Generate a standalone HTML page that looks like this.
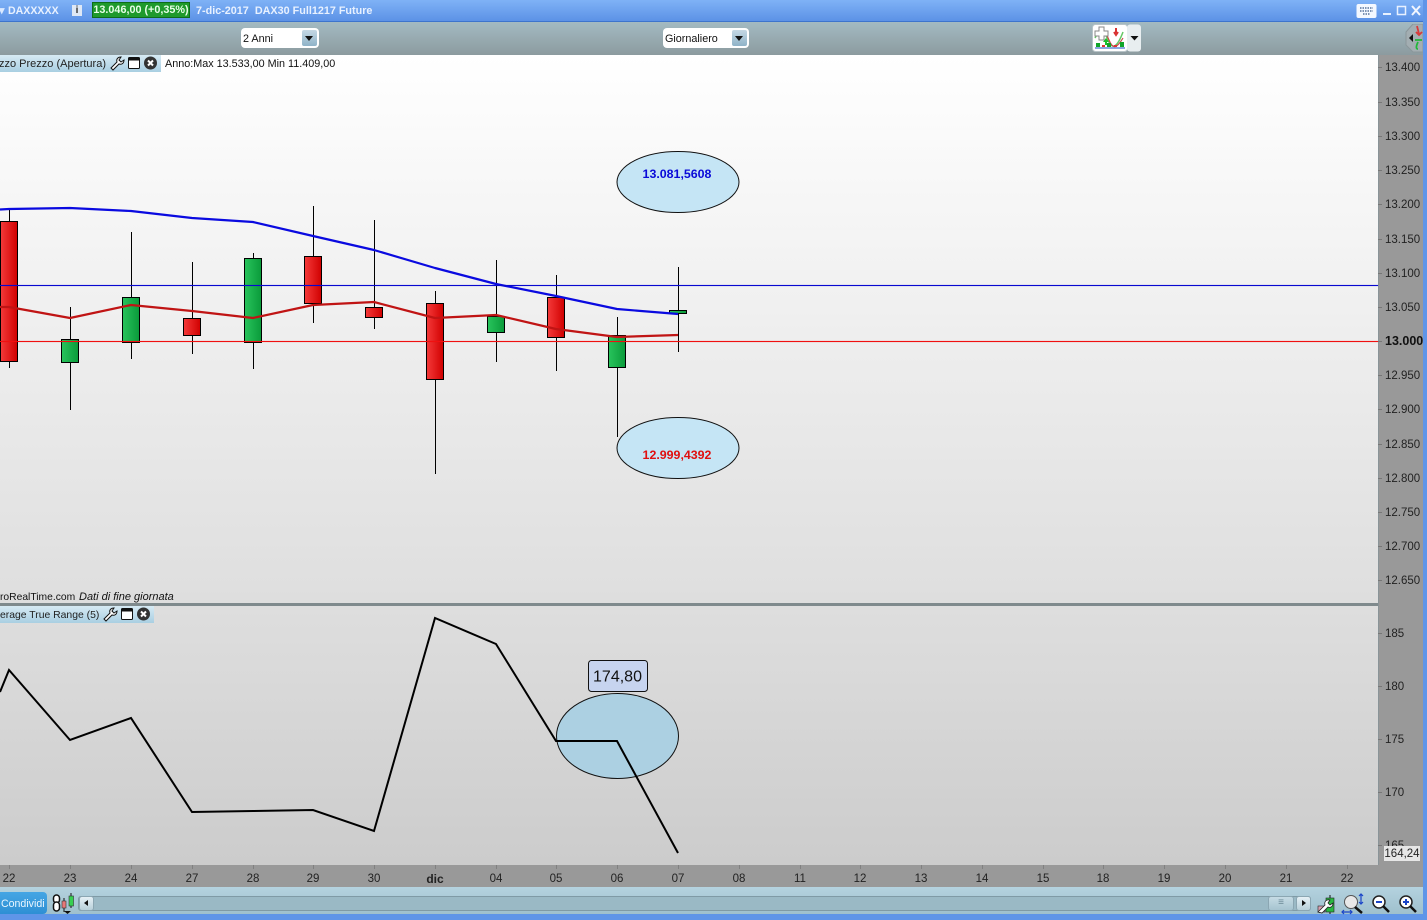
<!DOCTYPE html>
<html><head><meta charset="utf-8"><style>
html,body{margin:0;padding:0;width:1427px;height:920px;overflow:hidden;background:#999;font-family:"Liberation Sans",sans-serif}
.a{position:absolute}
.t{position:absolute;white-space:nowrap;font-size:11px;color:#111;line-height:13px}
.sel{position:absolute;top:28px;height:20px;background:#fff;border-radius:4px;font-size:10.8px;line-height:22px;padding-left:2px;box-sizing:border-box;color:#111}
.btn{position:absolute;top:2px;right:2px;width:15px;height:16px;background:linear-gradient(#c5d8e4,#8fb3c8);border-radius:2px}
.btn:after{content:"";position:absolute;left:3px;top:6px;border:4px solid transparent;border-top:5px solid #111;border-bottom:0}
.y{position:absolute;left:1385px;font-size:11.5px;color:#222;line-height:13px;white-space:nowrap}
.x{position:absolute;top:873px;width:40px;text-align:center;font-size:11.5px;color:#222;line-height:13px}
.tab{position:absolute;left:0;background:linear-gradient(#d6eaf4,#a9cfe2);color:#222;line-height:18px;white-space:nowrap;overflow:hidden}
</style></head><body>
<div class="a" style="left:0;top:0;width:1427px;height:21px;background:linear-gradient(#7fb2f6,#5c92e6);border-bottom:1px solid #3d74cc"></div>
<div class="a" style="left:0;top:22px;width:1427px;height:33px;background:linear-gradient(#a3bac2,#8c9b9f)"></div>
<div class="a" style="left:1423px;top:0;width:4px;height:920px;background:#5f95e8"></div>
<div class="t" style="left:-1px;top:5px;font-size:11px;color:#dbe9ff;font-weight:bold">&#9662;</div>
<div class="t" style="left:8px;top:5px;color:#e8f1ff;font-weight:bold;font-size:10.6px">DAXXXXX</div>
<div class="a" style="left:72px;top:5px;width:10px;height:11px;background:#dfe8f5;color:#333;font:bold 10px/11px 'Liberation Sans',sans-serif;text-align:center">i</div>
<div class="a" style="left:92px;top:2px;width:98px;height:16px;background:#1f9a2c;border:1px solid #0d6d18;box-sizing:border-box;color:#e8ffe8;font:bold 10.8px/15px 'Liberation Sans',sans-serif;text-align:center;white-space:nowrap">13.046,00 (+0,35%)</div>
<div class="t" style="left:196px;top:5px;color:#e8f1ff;font-weight:bold;font-size:10.8px">7-dic-2017<span style="margin-left:3px">&nbsp;</span>DAX30 Full1217 Future</div>
<svg class="a" style="left:1356px;top:3px" width="65" height="16" viewBox="0 0 65 16"><rect x="0.500" y="1" width="20" height="14" rx="2" fill="#f4f8ff"/><path d="M4 5h13M4 8h13M7 11h7" stroke="#56739c" stroke-width="1.500" stroke-dasharray="1.500 1"/><path d="M27 11h8" stroke="#e8f1ff" stroke-width="2"/><rect x="41.500" y="3.500" width="8" height="8" fill="none" stroke="#e8f1ff" stroke-width="1.500"/><path d="M56 3l8 9M64 3l-8 9" stroke="#f2f6ff" stroke-width="2"/></svg>
<div class="sel" style="left:241px;width:78px">2 Anni<div class="btn"></div></div>
<div class="sel" style="left:663px;width:86px">Giornaliero<div class="btn"></div></div>
<svg class="a" style="left:1092px;top:24px" width="50" height="28" viewBox="0 0 50 28"><rect x="0.500" y="0.500" width="35" height="27" rx="3" fill="#fff" stroke="#b8c4c8"/><rect x="35" y="0.500" width="14" height="27" rx="3" fill="#e8eef0"/><path d="M38.500 12h8l-4 4.500z" fill="#111"/><path d="M3 14c5-10 9-8 13 2s9 8 15-8" stroke="#65c765" stroke-width="1.500" fill="none"/><path d="M3 12c6-8 10-6 14 4s8 8 14-2" stroke="#c84b4b" stroke-width="1.200" fill="none"/><path d="M7 3h5v4h4v5h-4v4H7v-4H3V7h4z" fill="#fff" stroke="#888"/><path d="M14 14l-3 4h2v3h2v-3h2z" fill="#1cc02c"/><path d="M24 4v5M22 8l2 3 2-3" stroke="#d93333" stroke-width="2" fill="none"/><path d="M3 24h30" stroke="#174fc0"/><path d="M4 19h4v4H4zM15 19h4v4h-4zM28 18h4v5h-4z" fill="#12a52a"/><path d="M10 21h3v2h-3zM22 21h3v2h-3z" fill="#d33"/></svg>
<svg class="a" style="left:1405px;top:24px" width="18" height="29" viewBox="0 0 18 29"><path d="M18 0H8L1 8v13l7 7h10z" fill="#a3aeb2" stroke="#8b979b"/><path d="M8 10l-4 4 4 4z" fill="#111"/><path d="M12 2l2 8M11 8l3 3 3-3" stroke="#d83a3a" stroke-width="1.800" fill="none"/><path d="M13 25c-3 0-1-5 0-7M10 16h7" stroke="#22b83a" stroke-width="1.800" fill="none"/></svg>

<div class="a" style="left:0;top:55px;width:1378px;height:548px;background:linear-gradient(#fff,#dedede)"></div>
<div class="a" style="left:0;top:603px;width:1378px;height:3px;background:#7f8a8d"></div>
<div class="a" style="left:0;top:606px;width:1378px;height:259px;background:linear-gradient(#dedede,#cccccc)"></div>
<div class="a" style="left:1378px;top:55px;width:45px;height:810px;background:#999"></div>
<div class="a" style="left:1378px;top:55px;width:1px;height:810px;background:#8a9498"></div>
<div class="a" style="left:0;top:865px;width:1423px;height:22px;background:#999"></div>
<div class="a" style="left:0;top:887px;width:1423px;height:27px;background:linear-gradient(#b4d2df,#9fc0cd)"></div>
<div class="a" style="left:0;top:914px;width:1427px;height:6px;background:#5f95e8"></div>

<svg class="a" style="left:0;top:0" width="1427" height="920" viewBox="0 0 1427 920">
<defs>
<linearGradient id="r"><stop offset="0" stop-color="#f53a3a"/><stop offset="1" stop-color="#d00000"/></linearGradient>
<linearGradient id="g"><stop offset="0" stop-color="#28c45c"/><stop offset="1" stop-color="#0a9a3a"/></linearGradient>
</defs>
<g stroke="#000" stroke-width="1">
<path d="M9.500 210V368M70.500 307V410M131.500 232V359M192.500 262V354M253.500 253V369M313.500 206V323M374.500 220V329M435.500 291V474M496.500 260V362M556.500 275V371M617.500 317V437M678.500 267V352" fill="none"/>
<rect x="0.500" y="221.500" width="17" height="140" fill="url(#r)"/>
<rect x="61.500" y="339.500" width="17" height="23" fill="url(#g)"/>
<rect x="122.500" y="297.500" width="17" height="45" fill="url(#g)"/>
<rect x="183.500" y="318.500" width="17" height="17" fill="url(#r)"/>
<rect x="244.500" y="258.500" width="17" height="84" fill="url(#g)"/>
<rect x="304.500" y="256.500" width="17" height="47" fill="url(#r)"/>
<rect x="365.500" y="307.500" width="17" height="10" fill="url(#r)"/>
<rect x="426.500" y="303.500" width="17" height="76" fill="url(#r)"/>
<rect x="487.500" y="316.500" width="17" height="16" fill="url(#g)"/>
<rect x="547.500" y="297.500" width="17" height="40" fill="url(#r)"/>
<rect x="608.500" y="335.500" width="17" height="32" fill="url(#g)"/>
<rect x="669.500" y="310.500" width="17" height="3" fill="url(#g)"/>
</g>
<polyline points="0,209.500 9,209 70,208 131,211 192,218 253,222 313,236 374,250 435,268 496,284 556,296 617,309 678,314" fill="none" stroke="#0a0ae0" stroke-width="2.200" stroke-linejoin="round"/>
<polyline points="0,307 9,307 70,318 131,305 192,311 253,318 313,305 374,302 435,318 496,315 556,329 617,337 678,335" fill="none" stroke="#c01414" stroke-width="2.200" stroke-linejoin="round"/>
<ellipse cx="678" cy="182" rx="61" ry="30.500" fill="#c5e5f5" stroke="#111"/>
<ellipse cx="678" cy="448" rx="61" ry="30.500" fill="#c5e5f5" stroke="#111"/>
<ellipse cx="617.500" cy="736" rx="61" ry="42.500" fill="#acd0e2" stroke="#111"/>
<polyline points="0,692 9,670 70,740 131,718 192,812 253,811 313,810 374,831 435,618 496,644 556,741 617,741 678,853" fill="none" stroke="#000" stroke-width="2"/>
<rect x="588.500" y="660.500" width="59" height="31" rx="3" fill="#c7d4ef" stroke="#111"/>
<text x="617.500" y="681.500" text-anchor="middle" font-family="Liberation Sans" font-size="16" fill="#111">174,80</text>
<text x="677" y="178" text-anchor="middle" font-family="Liberation Sans" font-size="12.400" font-weight="bold" fill="#0a0ad8">13.081,5608</text>
<text x="677" y="459" text-anchor="middle" font-family="Liberation Sans" font-size="12.400" font-weight="bold" fill="#e01010">12.999,4392</text>
<path d="M1378 67.500h4M1378 102.500h4M1378 136.500h4M1378 170.500h4M1378 204.500h4M1378 239.500h4M1378 273.500h4M1378 307.500h4M1378 341.500h4M1378 375.500h4M1378 409.500h4M1378 444.500h4M1378 478.500h4M1378 512.500h4M1378 546.500h4M1378 580.500h4M1378 633.500h4M1378 686.500h4M1378 739.500h4M1378 792.500h4M1378 845.500h4" stroke="#777"/>
<path d="M9.500 865v4M70.500 865v4M131.500 865v4M192.500 865v4M253.500 865v4M313.500 865v4M374.500 865v4M435.500 865v4M496.500 865v4M556.500 865v4M617.500 865v4M678.500 865v4M739.500 865v4M800.500 865v4M860.500 865v4M921.500 865v4M982.500 865v4M1043.500 865v4M1103.500 865v4M1164.500 865v4M1225.500 865v4M1286.500 865v4M1347.500 865v4" stroke="#808080"/>
</svg>
<div class="a" style="left:0;top:285px;width:1378px;height:1px;background:#0808d0;box-shadow:0 0 1px rgba(8,8,208,.45)"></div>
<div class="a" style="left:0;top:341px;width:1378px;height:1px;background:#f01010;box-shadow:0 0 1px rgba(240,16,16,.45)"></div>

<div class="y" style="top:62px">13.400</div><div class="y" style="top:97px">13.350</div><div class="y" style="top:131px">13.300</div><div class="y" style="top:165px">13.250</div><div class="y" style="top:199px">13.200</div><div class="y" style="top:234px">13.150</div><div class="y" style="top:268px">13.100</div><div class="y" style="top:302px">13.050</div>
<div class="y" style="top:335px;font-weight:bold;font-size:12.500px;color:#111">13.000</div>
<div class="y" style="top:370px">12.950</div><div class="y" style="top:404px">12.900</div><div class="y" style="top:439px">12.850</div><div class="y" style="top:473px">12.800</div><div class="y" style="top:507px">12.750</div><div class="y" style="top:541px">12.700</div><div class="y" style="top:575px">12.650</div>
<div class="y" style="top:628px">185</div><div class="y" style="top:681px">180</div><div class="y" style="top:734px">175</div><div class="y" style="top:787px">170</div><div class="y" style="top:840px">165</div>
<div class="a" style="left:1384px;top:846px;width:36px;height:15px;background:#e6e6e6;font-size:11.500px;line-height:16px;text-align:center;color:#222">164,24</div>

<div class="tab" style="top:55px;width:161px;height:17px;font-size:11px"><span style="position:relative;left:-1px">zzo Prezzo (Apertura)</span></div>
<svg class="a" style="left:109px;top:55px" width="52" height="16" viewBox="0 0 52 16"><path d="M2 13l6-6c-1-3 1-5 4-5l-2 3 2 2 3-2c0 3-2 5-5 4l-6 6z" fill="#fff" stroke="#111"/><rect x="19.500" y="2.500" width="11" height="11" rx="1" fill="#fff" stroke="#111"/><rect x="19.500" y="2.500" width="11" height="3" fill="#111"/><circle cx="41.500" cy="8" r="6.500" fill="#333"/><path d="M39 5.500l5 5M44 5.500l-5 5" stroke="#fff" stroke-width="2"/></svg>
<div class="t" style="left:165px;top:58px;font-size:10.8px">Anno:Max 13.533,00 Min 11.409,00</div>
<div class="t" style="left:0;top:591px;font-size:10.3px">roRealTime.com</div>
<div class="t" style="left:79px;top:591px;font-style:italic">Dati di fine giornata</div>
<div class="tab" style="top:606px;width:154px;height:17px;font-size:10.4px;line-height:19px">erage True Range (5)</div>
<svg class="a" style="left:102px;top:606px" width="52" height="16" viewBox="0 0 52 16"><path d="M2 13l6-6c-1-3 1-5 4-5l-2 3 2 2 3-2c0 3-2 5-5 4l-6 6z" fill="#fff" stroke="#111"/><rect x="19.500" y="2.500" width="11" height="11" rx="1" fill="#fff" stroke="#111"/><rect x="19.500" y="2.500" width="11" height="3" fill="#111"/><circle cx="41.500" cy="8" r="6.500" fill="#333"/><path d="M39 5.500l5 5M44 5.500l-5 5" stroke="#fff" stroke-width="2"/></svg>

<div class="x" style="left:-11px">22</div><div class="x" style="left:50px">23</div><div class="x" style="left:111px">24</div><div class="x" style="left:172px">27</div><div class="x" style="left:233px">28</div><div class="x" style="left:293px">29</div><div class="x" style="left:354px">30</div><div class="x" style="left:415px;font-weight:bold;font-size:12px">dic</div><div class="x" style="left:476px">04</div><div class="x" style="left:536px">05</div><div class="x" style="left:597px">06</div><div class="x" style="left:658px">07</div><div class="x" style="left:719px">08</div><div class="x" style="left:780px">11</div><div class="x" style="left:840px">12</div><div class="x" style="left:901px">13</div><div class="x" style="left:962px">14</div><div class="x" style="left:1023px">15</div><div class="x" style="left:1083px">18</div><div class="x" style="left:1144px">19</div><div class="x" style="left:1205px">20</div><div class="x" style="left:1266px">21</div><div class="x" style="left:1327px">22</div>

<div class="a" style="left:-4px;top:892px;width:51px;height:22px;background:linear-gradient(#45a6e4,#2e8fd4);border-radius:4px;color:#eaf6ff;font-size:10.6px;line-height:24px;box-sizing:border-box;padding-left:5px;white-space:nowrap">Condividi</div>
<svg class="a" style="left:51px;top:892px" width="24" height="24" viewBox="0 0 24 24"><rect x="2.500" y="3" width="6" height="8" rx="3" fill="#fff" stroke="#111" stroke-width="1.500"/><rect x="2.500" y="10" width="6" height="9" rx="3" fill="#fff" stroke="#111" stroke-width="1.500"/><path d="M13 6v14" stroke="#111"/><rect x="11" y="9" width="4" height="7" fill="#e87878" stroke="#333" stroke-width=".6"/><path d="M20 1v15" stroke="#111"/><rect x="18" y="4" width="4.500" height="10" fill="#36d050" stroke="#333" stroke-width=".6"/><path d="M13 19h7l-3.500 3z" fill="#111"/></svg>
<div class="a" style="left:78px;top:896px;width:1233px;height:15px;background:#9ab9c5;border:1px solid #7f9aa5;box-sizing:border-box;border-radius:3px"></div>
<div class="a" style="left:79px;top:896px;width:15px;height:15px;background:linear-gradient(#e5f0f5,#b8d0da);border:1px solid #8ba6b2;box-sizing:border-box;border-radius:3px"></div>
<div class="a" style="left:84px;top:900px;border:3.500px solid transparent;border-right:4px solid #111;border-left:0"></div>
<div class="a" style="left:1268px;top:896px;width:26px;height:15px;background:linear-gradient(#c5dbe4,#a6c4d0);border:1px solid #8ba6b2;box-sizing:border-box;border-radius:3px;color:#6b8a96;font-size:10px;line-height:12px;text-align:center">&#8801;</div>
<div class="a" style="left:1296px;top:896px;width:15px;height:15px;background:linear-gradient(#e5f0f5,#b8d0da);border:1px solid #8ba6b2;box-sizing:border-box;border-radius:3px"></div>
<div class="a" style="left:1302px;top:900px;border:3.500px solid transparent;border-left:4px solid #111;border-right:0"></div>
<svg class="a" style="left:1316px;top:892px" width="105" height="24" viewBox="0 0 105 24"><path d="M4 14v7" stroke="#111"/><rect x="2" y="14" width="7" height="6" fill="#d9a0b0" stroke="#222" stroke-width=".6"/><path d="M14 3v19" stroke="#111"/><rect x="10" y="6" width="8" height="14" fill="#28b840" stroke="#222" stroke-width=".6"/><path d="M2 20l7-7c-1-3 1-6 5-5l-2 3 2 2 3-2c0 4-3 5-5 4l-6 6z" fill="#fff" stroke="#222" stroke-width=".8"/><circle cx="35" cy="10" r="6.500" fill="#e8e8e8" stroke="#555"/><path d="M39 15l7 6" stroke="#111" stroke-width="2.500"/><path d="M45 2v10M43 4l2-2 2 2M43 10l2 2 2-2M26 20h10M28 18l-2 2 2 2M34 18l2 2-2 2" stroke="#1a44c8" fill="none" stroke-width="1.200"/><circle cx="63" cy="10" r="6" fill="#fff" stroke="#222" stroke-width="1.500"/><path d="M60 10h6" stroke="#1a44c8" stroke-width="2"/><path d="M67 14l6 6" stroke="#111" stroke-width="2.500"/><circle cx="90" cy="10" r="6" fill="#fff" stroke="#222" stroke-width="1.500"/><path d="M87 10h6M90 7v6" stroke="#1a44c8" stroke-width="2"/><path d="M94 14l6 6" stroke="#111" stroke-width="2.500"/></svg>
</body></html>
